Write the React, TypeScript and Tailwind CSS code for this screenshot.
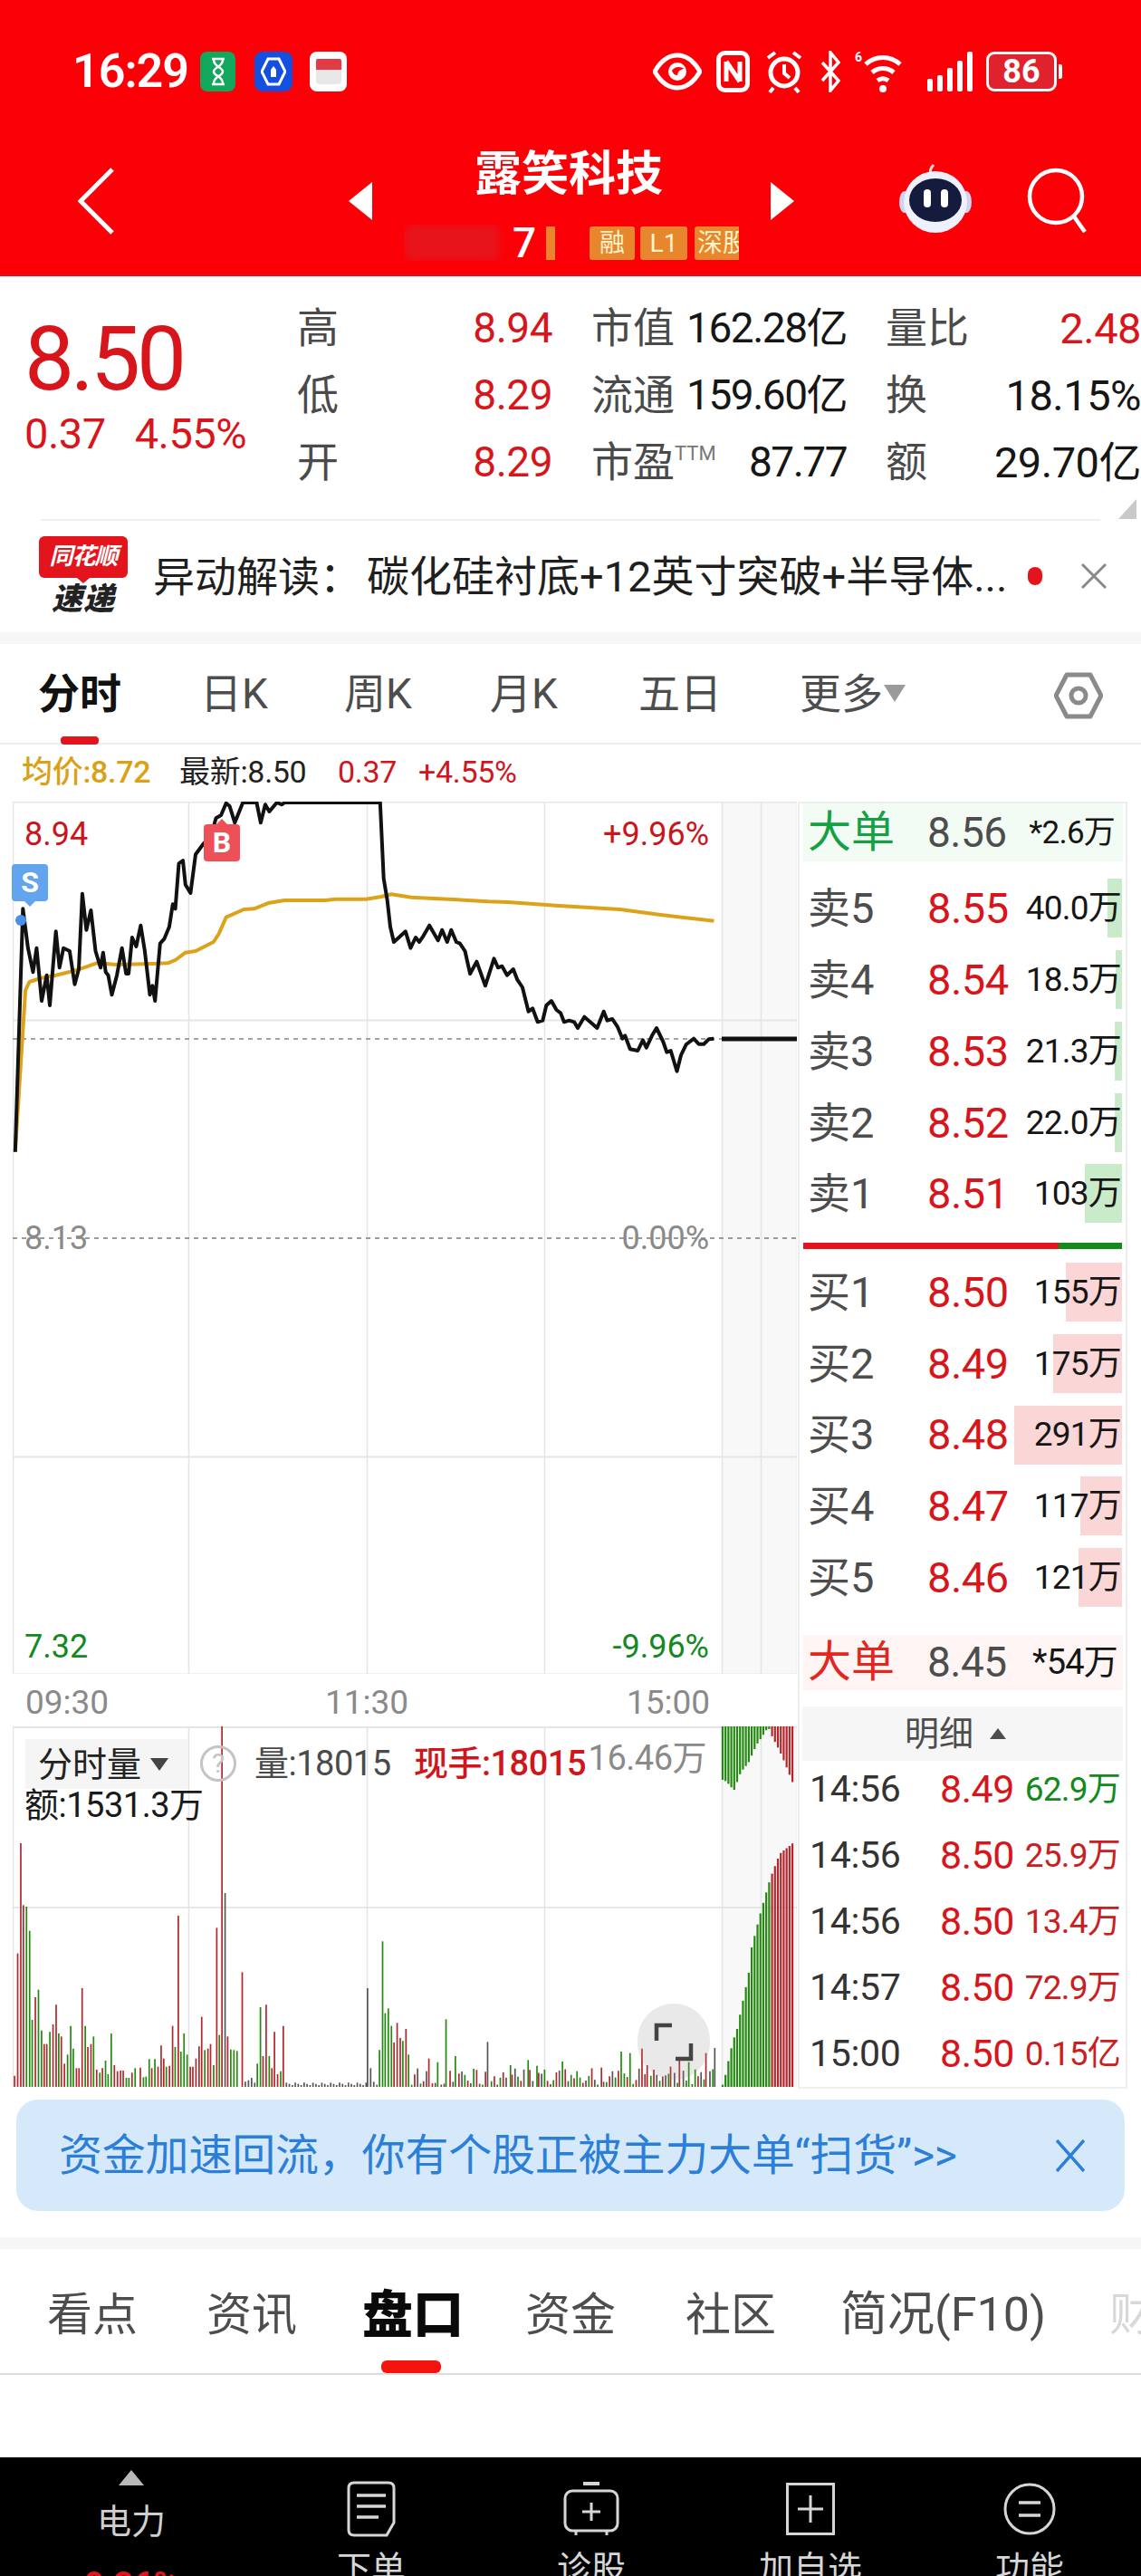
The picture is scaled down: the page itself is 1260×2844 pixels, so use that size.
import type { ReactNode } from 'react';

const RED = 'text-[#d8151b]';

// traced from the minute chart: [x, y] in chart pixels
const rawPrice = [30,1235,45,430,55,560,65,640,72,560,82,735,92,650,98,750,110,505,117,625,125,560,137,570,147,680,155,630,162,380,170,500,179,435,188,570,198,625,203,575,208,640,213,650,220,715,230,650,240,560,248,645,253,645,260,525,268,555,277,485,285,570,295,715,300,685,305,735,315,545,323,530,333,490,340,415,345,430,352,280,360,270,365,350,375,378,385,250,400,215,415,190,425,130,435,120,445,80,452,90,462,145,478,78,505,78,513,145,522,85,530,108,545,78,555,85,560,78,748,78,755,330,762,400,768,490,775,540,785,525,798,505,808,560,818,525,825,540,833,520,845,485,862,535,870,500,880,540,888,500,898,540,905,545,915,570,925,645,938,605,955,685,972,595,980,625,988,620,998,650,1010,630,1018,665,1028,690,1040,770,1048,760,1058,805,1068,800,1075,750,1085,735,1095,765,1103,775,1110,805,1120,800,1130,805,1137,825,1150,788,1165,810,1175,825,1188,770,1195,800,1205,795,1215,820,1225,860,1230,850,1240,895,1255,900,1265,865,1272,890,1283,850,1292,825,1305,870,1312,905,1320,900,1332,968,1340,915,1350,880,1365,860,1375,878,1385,878,1395,862,1405,860];
const rawAvg = [30,1235,50,700,58,672,80,660,110,650,135,640,165,625,190,610,230,615,300,612,330,610,345,600,365,575,385,570,420,540,430,515,445,458,480,432,500,430,530,410,560,402,640,402,660,398,720,398,750,390,770,382,810,392,900,400,960,406,1000,408,1100,420,1220,432,1300,450,1405,470];

function toPoints(raw: number[]) {
  const out: string[] = [];
  for (let i = 0; i < raw.length; i += 2) {
    out.push(`${(raw[i] / 1.782 - 14).toFixed(1)},${(raw[i + 1] / 3 - 25).toFixed(1)}`);
  }
  return out.join(' ');
}

type Bar = [number, number, string];
const volBars: Bar[] = [
  [28,1355,'r'],[34,950,'r'],[40,585,'r'],[45,790,'r'],[51,795,'g'],[57,875,'g'],[62,1170,'g'],[68,1095,'r'],[74,1070,'g'],[80,1205,'g'],[85,1250,'r'],[90,1250,'r'],[96,1210,'g'],[102,1185,'r'],[108,1120,'r'],[113,1215,'g'],[118,1225,'r'],[124,1315,'r'],[130,1285,'g'],[136,1190,'g'],[141,1265,'g'],[147,1330,'r'],[152,1330,'r'],[158,1065,'r'],[164,1190,'g'],[169,1260,'r'],[175,1250,'r'],[180,1225,'g'],[186,1335,'r'],[192,1345,'g'],[197,1330,'r'],[203,1305,'g'],[208,1350,'g'],[214,1215,'g'],[220,1320,'r'],[226,1340,'r'],[232,1338,'r'],[237,1338,'r'],[243,1362,'g'],[248,1362,'g'],[254,1345,'r'],[260,1330,'g'],[270,1328,'r'],[276,1360,'g'],[281,1358,'g'],[287,1300,'g'],[292,1330,'r'],[298,1300,'g'],[304,1325,'r'],[310,1255,'r'],[315,1298,'r'],[320,1325,'g'],[326,1322,'r'],[332,1190,'r'],[337,1260,'g'],[343,825,'r'],[348,1275,'g'],[354,1215,'g'],[360,1285,'g'],[366,1325,'r'],[371,1325,'r'],[377,1298,'r'],[383,1258,'r'],[388,1160,'r'],[394,1270,'g'],[400,1265,'r'],[405,1250,'r'],[411,1320,'g'],[417,865,'r'],[422,1220,'g'],[427,198,'r'],[433,750,'k'],[438,1225,'r'],[444,1268,'g'],[450,1270,'g'],[456,1273,'g'],[466,1012,'r'],[472,1375,'k'],[478,1370,'k'],[484,1362,'k'],[490,1378,'k'],[495,1315,'g'],[501,1128,'g'],[506,1290,'r'],[512,1120,'r'],[518,1290,'g'],[523,1330,'r'],[528,1210,'r'],[534,1350,'r'],[540,1340,'g'],[545,1190,'r'],
  [707,1065,'k'],[713,1330,'k'],[719,1375,'k'],[725,1385,'k'],[730,1270,'g'],[736,910,'g'],[741,1148,'g'],[747,1132,'g'],[753,1190,'g'],[758,1245,'r'],[764,1180,'r'],[770,1230,'r'],[775,1240,'g'],[781,1200,'r'],[786,1285,'g'],
];
for (let i = 0; i < 28; i++) {
  volBars.push([551 + i * 5.68, 1378 + (i % 3) * 4, 'k']);
}
const spikes: Record<number, Bar> = { 6: [825,1298,'r'], 9: [842,1310,'g'], 12: [858,1168,'g'], 15: [876,1290,'g'], 26: [938,1243,'k'], 33: [982,1320,'g'], 39: [1016,1303,'g'], 42: [1033,1322,'g'], 51: [1082,1308,'g'], 56: [1110,1340,'g'], 64: [1157,1328,'r'], 71: [1195,1275,'g'], 74: [1212,1280,'g'], 78: [1235,1265,'r'], 80: [1245,1320,'r'], 88: [1290,1325,'r'], 91: [1307,1295,'r'], 94: [1325,1310,'g'], 100: [1358,1280,'r'], 103: [1375,1263,'k'] };
for (let i = 0; i < 104; i++) {
  if (spikes[i]) {
    volBars.push(spikes[i]);
    continue;
  }
  const n = Math.abs(Math.sin(i * 12.9) * 43758) % 1;
  volBars.push([792 + i * 5.68, 1385 - n * 55, i % 3 === 0 ? 'g' : i % 3 === 1 ? 'r' : 'k']);
}

// call auction columns, interpolated between traced points
const upCurve = [1390,1385,1396,1350,1402,1300,1410,1240,1419,1195,1425,1140,1440,1020,1446,930,1460,835,1472,760,1482,700,1500,620,1525,585];
const downCurve = [1390,375,1397,380,1412,410,1425,350,1440,318,1455,260,1465,235,1478,200,1485,230,1500,280,1510,320,1525,385];

function curveAt(curve: number[], x: number) {
  for (let i = 0; i < curve.length - 2; i += 2) {
    if (x <= curve[i + 2]) {
      const t = (x - curve[i]) / (curve[i + 2] - curve[i]);
      return curve[i + 1] + (curve[i + 3] - curve[i + 1]) * t;
    }
  }
  return curve[curve.length - 1];
}

const auctionXs: number[] = [];
for (let x = 1390; x <= 1526; x += 5.6) auctionXs.push(x);

const barColor: Record<string, string> = { r: '#b3262b', g: '#23890f', k: '#555555' };
const vx = (zx: number) => zx / 1.742 - 14;
const vy = (zy: number) => zy / 3 - 66;

function CloseIcon({ w, h, color, stroke }: { w: number; h: number; color: string; stroke: number }) {
  return (
    <svg width={w} height={h} viewBox={`0 0 ${w} ${h}`} fill="none" stroke={color} strokeWidth={stroke}>
      <path d={`M1 1L${w - 1} ${h - 1}M${w - 1} 1L1 ${h - 1}`} />
    </svg>
  );
}

function StatusIcons() {
  return (
    <div className="flex items-center">
      <svg width="54" height="46" viewBox="0 0 54 46" className="mr-[16px]" fill="none">
        <path d="M2 23C10 9 18 5 27 5s17 4 25 18c-8 14-16 18-25 18S10 37 2 23Z" stroke="#fff" strokeWidth="5" />
        <circle cx="27" cy="23" r="10" fill="#fff" />
        <path d="M21 22c3-5 9-5 14-2-4 0-7 2-8 7-3 0-5-2-6-5Z" fill="#fb0007" />
      </svg>
      <svg width="37" height="46" viewBox="0 0 37 46" className="mr-[17px]" fill="none">
        <rect x="2.5" y="2.5" width="32" height="41" rx="7" stroke="#fff" strokeWidth="5" />
        <path d="M11 12v22M26 12v22M11 12l15 22" stroke="#fff" strokeWidth="5" />
      </svg>
      <svg width="42" height="48" viewBox="0 0 42 48" className="mr-[17px]" fill="none">
        <circle cx="21" cy="25" r="15" stroke="#fff" strokeWidth="5" />
        <path d="M21 16v10l6 5" stroke="#fff" strokeWidth="4" />
        <path d="M3 9l8-6M39 9l-8-6M9 42l-4 5M33 42l4 5" stroke="#fff" strokeWidth="4" />
      </svg>
      <svg width="26" height="46" viewBox="0 0 26 46" className="mr-[14px]" fill="none">
        <path d="M4 13l18 20-9 11V2l9 11L4 33" stroke="#fff" strokeWidth="3.5" />
      </svg>
      <svg width="58" height="48" viewBox="0 0 58 48" className="mr-[22px]" fill="none">
        <path d="M12 16c11-10 27-10 38 0" stroke="#fff" strokeWidth="5" />
        <path d="M19 25c7-6 17-6 24 0" stroke="#fff" strokeWidth="5" />
        <path d="M25 34c4-3 8-3 12 0" stroke="#fff" strokeWidth="5" />
        <circle cx="31" cy="43" r="4" fill="#fff" />
        <text x="0" y="13" fill="#fff" fontSize="14" fontWeight="700" fontFamily="Roboto">6</text>
      </svg>
      <div className="flex items-end gap-[5px] mr-[15px] h-[44px]">
        <div className="w-[6px] h-[14px] bg-white rounded-[2px]" />
        <div className="w-[6px] h-[18px] bg-white rounded-[2px]" />
        <div className="w-[6px] h-[26px] bg-white rounded-[2px]" />
        <div className="w-[6px] h-[34px] bg-white rounded-[2px]" />
        <div className="w-[6px] h-[44px] bg-white rounded-[2px]" />
      </div>
      <div className="flex items-center">
        <div className="w-[78px] h-[44px] rounded-[9px] border-[3px] border-white bg-[#e0222e] flex items-center justify-center text-white text-[36px] font-bold leading-none">
          86
        </div>
        <div className="w-[4px] h-[16px] ml-[2px] bg-white rounded-r-[2px]" />
      </div>
    </div>
  );
}

function Robot() {
  return (
    <svg width="84" height="80" viewBox="0 0 84 80">
      <path d="M37 14c-2-5 0-8 3-11" stroke="#f3d9d9" strokeWidth="3" fill="none" />
      <ellipse cx="8" cy="44" rx="6" ry="12" fill="#cfd3ee" />
      <ellipse cx="76" cy="44" rx="6" ry="12" fill="#cfd3ee" />
      <ellipse cx="42" cy="44" rx="35" ry="34" fill="#eef0fb" />
      <ellipse cx="42" cy="42" rx="29" ry="24" fill="#141b3c" />
      <rect x="29" y="30" width="8" height="20" rx="4" fill="#fff" />
      <rect x="48" y="30" width="8" height="20" rx="4" fill="#fff" />
    </svg>
  );
}

function Header() {
  return (
    <div className="h-[305px] pt-[56px] bg-[#fb0007] text-white border-b-[2px] border-[#d9141c]">
      <div className="h-[46px] flex items-center justify-between pl-[80px] pr-[87px]">
        <div className="flex items-center">
          <span className="text-[52px] font-semibold tracking-[-1px] leading-none w-[141px]">16:29</span>
          <div className="w-[39px] h-[44px] rounded-[8px] bg-[#12a85c] flex items-center justify-center">
            <svg width="20" height="32" viewBox="0 0 20 32" fill="none" stroke="#fff" strokeWidth="2.5">
              <path d="M3 2h14M3 30h14M5 3c0 8 10 8 10 13s-10 5-10 13M15 3c0 8-10 8-10 13s10 5 10 13" />
            </svg>
          </div>
          <div className="w-[42px] h-[44px] ml-[21px] rounded-[9px] bg-[#1450e0] flex items-center justify-center">
            <svg width="28" height="32" viewBox="0 0 28 32" fill="none" stroke="#fff" strokeWidth="3">
              <path d="M8 2h12l7 14-7 14H8L1 16 8 2Z" />
              <path d="M11 22v-8l3-4 3 4v8z" fill="#fff" stroke="none" />
            </svg>
          </div>
          <div className="w-[41px] h-[44px] ml-[19px] rounded-[8px] bg-white flex flex-col items-center justify-center">
            <div className="w-[28px] h-[12px] bg-[#e33a44] rounded-t-[2px]" />
            <div className="w-[28px] h-[16px] bg-[#e8e8e8] rounded-b-[4px]" />
          </div>
        </div>
        <StatusIcons />
      </div>

      <div className="mt-[51px] h-[150px] flex items-start">
        <svg width="40" height="74" viewBox="0 0 40 74" fill="none" stroke="#fff" strokeWidth="5" className="ml-[86px] mt-[32px]">
          <path d="M38 2L3 37l35 35" />
        </svg>
        <div className="flex items-center ml-[259px] h-[92px]">
          <div className="w-0 h-0 mt-[46px] border-y-[21px] border-y-transparent border-r-[26px] border-r-white" />
        </div>
        <div className="w-[440px] flex flex-col items-center">
          <div className="text-[52px] font-bold leading-[60px] mt-[10px] ml-[-6px]">露笑科技</div>
          <div className="flex items-center self-start h-[40px] mt-[25px] w-[370px] ml-[35px] overflow-hidden">
            <div className="w-[105px] h-[40px] shrink-0 bg-[#e8141c] rounded-[8px] blur-[4px]" />
            <span className="ml-[15px] text-[46px] font-medium leading-none w-[37px] shrink-0">7</span>
            <div className="w-[10px] h-[37px] shrink-0 bg-[#e8862e]" />
            <div className="ml-[38px] w-[50px] h-[37px] shrink-0 rounded-[3px] bg-[#e8862e] text-[28px] leading-[37px] text-center text-[#fff3c8]">融</div>
            <div className="ml-[6px] w-[52px] h-[37px] shrink-0 rounded-[3px] bg-[#e8862e] text-[28px] leading-[37px] text-center text-[#fff3c8]">L1</div>
            <div className="ml-[8px] w-[60px] h-[37px] shrink-0 rounded-l-[3px] bg-[#e8862e] text-[28px] leading-[37px] pl-[3px] text-[#fff3c8] whitespace-nowrap">深股</div>
          </div>
        </div>
        <div className="flex items-center h-[92px]">
          <div className="w-0 h-0 mt-[46px] border-y-[21px] border-y-transparent border-l-[26px] border-l-white" />
        </div>
        <div className="ml-[114px] mt-[26px]">
          <Robot />
        </div>
        <svg width="72" height="72" viewBox="0 0 72 72" fill="none" stroke="#fff" strokeWidth="4.5" className="ml-[58px] mt-[32px]">
          <circle cx="33" cy="32" r="29" />
          <path d="M53 54l12 17" />
        </svg>
      </div>
    </div>
  );
}

const quoteRows = [
  { a: '高', av: '8.94', b: '市值', bv: '162.28亿', c: '量比', cv: '2.48', cRed: true },
  { a: '低', av: '8.29', b: '流通', bv: '159.60亿', c: '换', cv: '18.15%', cRed: false },
  { a: '开', av: '8.29', b: '市盈', bv: '87.77', c: '额', cv: '29.70亿', cRed: false },
];

function Quote() {
  return (
    <div className="h-[268px] relative flex">
      <div className="w-[328px] pl-[27px] pt-[42px]">
        <div className={`text-[98px] leading-[100px] tracking-[-4px] ${RED}`}>8.50</div>
        <div className={`mt-[7px] text-[47px] leading-[50px] tracking-[-0.5px] ${RED} flex gap-[32px] whitespace-nowrap`}>
          <span>0.37</span>
          <span>4.55%</span>
        </div>
      </div>
      <div className="pt-[20px] w-[932px]">
        {quoteRows.map((row) => (
          <div key={row.a} className="h-[74px] grid grid-cols-[282px_43px_282px_43px_282px] items-center text-[46px] leading-none text-[#4a4a4a]">
            <div className="flex justify-between items-center">
              <span>{row.a}</span>
              <span className={`text-[46px] tracking-[-0.5px] ${RED}`}>{row.av}</span>
            </div>
            <div />
            <div className="flex justify-between items-center">
              <span className="flex items-start">
                {row.b}
                {row.b === '市盈' && <span className="text-[22px] leading-[28px] text-[#777]">TTM</span>}
              </span>
              <span className="text-[46px] tracking-[-1.5px] text-[#161616]">{row.bv}</span>
            </div>
            <div />
            <div className="flex justify-between items-center">
              <span>{row.c}</span>
              <span className={`text-[47px] tracking-[-0.5px] whitespace-nowrap ${row.cRed ? RED : 'text-[#161616]'}`}>{row.cv}</span>
            </div>
          </div>
        ))}
      </div>
      <div className="absolute right-[5px] bottom-[0px] w-0 h-0 border-b-[22px] border-b-[#c9c9c9] border-l-[20px] border-l-transparent" />
    </div>
  );
}

function News() {
  return (
    <div className="h-[125px] flex items-center border-t-[2px] border-[#efefef] mx-[45px] relative">
      <div className="w-[100px] -ml-[3px] flex flex-col items-center -mt-[4px]">
        <div className="w-[98px] h-[46px] bg-[#e3141c] rounded-[6px] text-white text-[26px] font-bold italic leading-[44px] text-center tracking-[-1px] whitespace-nowrap">同花顺</div>
        <div className="w-0 h-0 border-x-[7px] border-x-transparent border-t-[6px] border-t-[#e3141c]" />
        <div className="text-[34px] font-black italic leading-[34px] text-[#222] tracking-[1px]">速递</div>
      </div>
      <div className="ml-[27px] leading-none text-[#1f1f1f] whitespace-nowrap flex items-center">
        <span className="text-[46px] w-[236px]">异动解读：</span>
        <span className="text-[47px]">碳化硅衬底+12英寸突破+半导体...</span>
      </div>
      <div className="absolute left-[1090px] top-[51px] w-[16px] h-[20px] rounded-full bg-[#e3141c]" />
      <div className="absolute left-[1149px] top-[47px]">
        <CloseIcon w={28} h={28} color="#8a8a8a" stroke={3} />
      </div>
    </div>
  );
}

const periods = [
  { t: '日K', w: 'w-[159px]' },
  { t: '周K', w: 'w-[161px]' },
  { t: '月K', w: 'w-[164px]' },
  { t: '五日', w: 'w-[178px]' },
];

function Periods() {
  return (
    <div className="h-[124px] border-t-[13px] border-[#f6f6f6] border-b-[2px] border-b-[#eeeeee] relative flex items-center pl-[42px] text-[46px] leading-none text-[#4d4d4d]">
      <div className="w-[179px] font-bold text-[#111]">分时</div>
      {periods.map((p) => (
        <div key={p.t} className={p.w}>{p.t}</div>
      ))}
      <div className="flex items-center">
        更多
        <div className="ml-[1px] w-0 h-0 border-x-[12px] border-x-transparent border-t-[19px] border-t-[#9a9a9a]" />
      </div>
      <svg width="54" height="52" viewBox="0 0 54 52" fill="none" stroke="#8a8a8a" strokeWidth="5" className="absolute left-[1164px] top-[31px]">
        <path d="M14 3h26l12 23-12 23H14L2 26 14 3Z" strokeLinejoin="round" />
        <circle cx="27" cy="26" r="8" />
      </svg>
      <div className="absolute left-[67px] bottom-[-2px] w-[42px] h-[9px] rounded-[4px] bg-[#e3141c]" />
    </div>
  );
}

function MainChart() {
  const vLines = [0, 194, 391, 587, 783, 826, 866];
  const hLines = [0, 241, 723, 963];
  return (
    <div className="relative ml-[14px] w-[866px] h-[963px]">
      <svg width="866" height="963" viewBox="0 0 866 963" className="block">
        <rect x="783" y="0" width="83" height="963" fill="#f8f8f8" />
        {vLines.map((x) => (
          <line key={x} x1={x + 0.5} y1="0" x2={x + 0.5} y2="963" stroke="#e4e4e4" strokeWidth="1.5" />
        ))}
        {hLines.map((y) => (
          <line key={y} x1="0" y1={y + 0.5} x2="866" y2={y + 0.5} stroke="#e6e6e6" strokeWidth="2" />
        ))}
        <line x1="0" y1="482" x2="866" y2="482" stroke="#9a9a9a" strokeWidth="2" strokeDasharray="5 5" />
        <line x1="0" y1="262" x2="783" y2="262" stroke="#a8a49a" strokeWidth="2" strokeDasharray="5 5" />
        <polyline points={toPoints(rawAvg)} fill="none" stroke="#dca31a" strokeWidth="4" strokeLinejoin="round" />
        <polyline points={toPoints(rawPrice)} fill="none" stroke="#111" strokeWidth="4" strokeLinejoin="round" />
        <line x1="783" y1="262" x2="866" y2="262" stroke="#111" strokeWidth="5" />
        <circle cx="9" cy="131" r="6" fill="#4a8fe8" />
      </svg>
      <div className="absolute left-[13px] top-[18px] text-[36px] leading-none text-[#c9161c]">8.94</div>
      <div className="absolute right-[97px] top-[18px] text-[36px] leading-none text-[#c9161c]">+9.96%</div>
      <div className="absolute left-[13px] top-[464px] text-[36px] leading-none text-[#8a8a8a]">8.13</div>
      <div className="absolute right-[97px] top-[464px] text-[36px] leading-none text-[#8a8a8a]">0.00%</div>
      <div className="absolute left-[13px] top-[915px] text-[36px] leading-none text-[#13891f]">7.32</div>
      <div className="absolute right-[97px] top-[915px] text-[36px] leading-none text-[#13891f]">-9.96%</div>
      <div className="absolute left-[-1px] top-[69px] flex flex-col items-center">
        <div className="w-[40px] h-[41px] rounded-[4px] bg-[#62a4ee] text-white text-[32px] font-bold leading-[41px] text-center">S</div>
        <div className="w-0 h-0 border-x-[6px] border-x-transparent border-t-[6px] border-t-[#62a4ee]" />
      </div>
      <div className="absolute left-[211px] top-[19px] flex flex-col items-center">
        <div className="w-0 h-0 border-x-[6px] border-x-transparent border-b-[6px] border-b-[#ee5058]" />
        <div className="w-[40px] h-[41px] rounded-[4px] bg-[#ee5058] text-white text-[32px] font-bold leading-[41px] text-center">B</div>
      </div>
    </div>
  );
}

function VolumeChart() {
  const vLines = [0, 194, 391, 587, 783, 826, 866];
  return (
    <div className="relative ml-[14px] w-[866px] h-[398px]">
      <svg width="866" height="398" viewBox="0 0 866 398" className="block">
        <rect x="783" y="0" width="83" height="398" fill="#f8f8f8" />
        {vLines.map((x) => (
          <line key={x} x1={x + 0.5} y1="0" x2={x + 0.5} y2="398" stroke="#e4e4e4" strokeWidth="1.5" />
        ))}
        <line x1="0" y1="1" x2="866" y2="1" stroke="#e6e6e6" strokeWidth="2" />
        <line x1="0" y1="200" x2="866" y2="200" stroke="#e0e0e0" strokeWidth="1.5" />
        {volBars.map(([x, top, c], i) => (
          <line key={i} x1={vx(x)} y1={vy(top)} x2={vx(x)} y2="398" stroke={barColor[c]} strokeWidth="1.7" />
        ))}
        {auctionXs.map((x) => (
          <line key={x} x1={vx(x)} y1={vy(curveAt(upCurve, x))} x2={vx(x)} y2="398" stroke={x < 1480 ? barColor.g : barColor.r} strokeWidth="2.2" />
        ))}
        {auctionXs.map((x) => (
          <line key={x} x1={vx(x)} y1="0" x2={vx(x)} y2={vy(curveAt(downCurve, x))} stroke={x < 1480 ? barColor.g : barColor.r} strokeWidth="2.2" />
        ))}
      </svg>
      <div className="absolute left-[14px] top-[14px] w-[180px] h-[55px] bg-[#f5f5f5] flex items-center pl-[14px] text-[38px] leading-none text-[#222]">
        分时量
        <div className="ml-[10px] w-0 h-0 border-x-[10px] border-x-transparent border-t-[14px] border-t-[#444]" />
      </div>
      <div className="absolute left-[207px] top-[21px] w-[40px] h-[40px] rounded-full border-[3px] border-[#c4c4c4] text-[#c4c4c4] text-[30px] leading-[34px] text-center">?</div>
      <div className="absolute left-[267px] top-[22px] text-[38px] leading-none text-[#4a4a4a] tracking-[-0.5px]">量:18015</div>
      <div className="absolute left-[443px] top-[22px] text-[38px] leading-none font-medium text-[#d0161c] tracking-[-0.5px] whitespace-nowrap">现手:18015</div>
      <div className="absolute right-[100px] top-[16px] text-[38px] leading-none text-[#8a8a8a] tracking-[-0.5px]">16.46万</div>
      <div className="absolute left-[13px] top-[68px] text-[38px] leading-none text-[#1a1a1a] tracking-[-0.5px]">额:1531.3万</div>
      <div className="absolute left-[690px] top-[306px] w-[80px] h-[84px] rounded-full bg-[#8f8f8f]/20 flex items-center justify-center">
        <svg width="44" height="44" viewBox="0 0 44 44" fill="none" stroke="#444" strokeWidth="4.5">
          <path d="M3 21V4h17M41 24v17H24" />
        </svg>
      </div>
    </div>
  );
}

const asks = [
  { l: '卖5', p: '8.55', v: '40.0万', bar: 'w-[16px]' },
  { l: '卖4', p: '8.54', v: '18.5万', bar: 'w-[7px]' },
  { l: '卖3', p: '8.53', v: '21.3万', bar: 'w-[8px]' },
  { l: '卖2', p: '8.52', v: '22.0万', bar: 'w-[8px]' },
  { l: '卖1', p: '8.51', v: '103万', bar: 'w-[41px]' },
];
const bids = [
  { l: '买1', p: '8.50', v: '155万', bar: 'w-[62px]' },
  { l: '买2', p: '8.49', v: '175万', bar: 'w-[76px]' },
  { l: '买3', p: '8.48', v: '291万', bar: 'w-[119px]' },
  { l: '买4', p: '8.47', v: '117万', bar: 'w-[46px]' },
  { l: '买5', p: '8.46', v: '121万', bar: 'w-[48px]' },
];
const ticks = [
  { t: '14:56', p: '8.49', v: '62.9万', up: false },
  { t: '14:56', p: '8.50', v: '25.9万', up: true },
  { t: '14:56', p: '8.50', v: '13.4万', up: true },
  { t: '14:57', p: '8.50', v: '72.9万', up: true },
  { t: '15:00', p: '8.50', v: '0.15亿', up: true },
];

function BookRow({ l, p, v, bar, tone }: { l: string; p: string; v: string; bar: string; tone: string }) {
  return (
    <div className="relative flex items-center h-[79.5px] pl-[9px]">
      <div className={`absolute right-[4px] top-[7px] h-[65px] ${bar} ${tone}`} />
      <span className="relative w-[132px] text-[47px] leading-none text-[#4d4d4d]">{l}</span>
      <span className={`relative text-[47px] leading-none tracking-[-0.5px] ${RED}`}>{p}</span>
      <span className="relative ml-auto mr-[5px] text-[37px] leading-none text-[#161616] tracking-[-0.8px]">{v}</span>
    </div>
  );
}

function OrderBook() {
  return (
    <div className="w-[364px] h-[1421px] border-l-[2px] border-r-[2px] border-y-[2px] border-[#eeeeee] flex flex-col">
      <div className="h-[65px] mx-[3px] bg-[#f3fbf5] flex items-center pl-[6px]">
        <span className="w-[132px] text-[48px] leading-none text-[#14a043]">大单</span>
        <span className="text-[46px] leading-none tracking-[-0.5px] text-[#4d4d4d]">8.56</span>
        <span className="ml-auto mr-[9px] text-[35px] leading-none text-[#161616] tracking-[-0.8px]">*2.6万</span>
      </div>
      <div className="h-[12px]" />
      {asks.map((r) => (
        <BookRow key={r.l} {...r} tone="bg-[#c9ebc9]" />
      ))}
      <div className="h-[15px]" />
      <div className="mx-[4px] h-[7px] flex">
        <div className="w-[282px] bg-[#e3141c]" />
        <div className="flex-1 bg-[#138a1c]" />
      </div>
      <div className="h-[8px]" />
      {bids.map((r) => (
        <BookRow key={r.l} {...r} tone="bg-[#fbd6d6]" />
      ))}
      <div className="h-[24px]" />
      <div className="h-[62px] mx-[3px] bg-[#fef5f4] flex items-center pl-[6px]">
        <span className="w-[132px] text-[48px] leading-none text-[#e3261e]">大单</span>
        <span className="text-[46px] leading-none tracking-[-0.5px] text-[#4d4d4d]">8.45</span>
        <span className="ml-auto mr-[6px] text-[38px] leading-none text-[#161616] tracking-[-0.8px]">*54万</span>
      </div>
      <div className="h-[18px]" />
      <div className="h-[60px] shrink-0 mx-[3px] bg-[#f6f6f6] flex items-center justify-center text-[38px] leading-none text-[#4d4d4d] pr-[16px]">
        明细
        <div className="ml-[18px] w-0 h-0 border-x-[9px] border-x-transparent border-b-[12px] border-b-[#4d4d4d]" />
      </div>
      <div className="-mt-[5px]">
        {ticks.map((r, i) => (
          <div key={i} className="h-[73px] flex items-center pl-[11px]">
            <span className="w-[144px] text-[41px] leading-none text-[#333] tracking-[-0.3px]">{r.t}</span>
            <span className={`text-[43px] leading-none tracking-[-0.5px] ${RED}`}>{r.p}</span>
            <span className={`ml-auto mr-[6px] text-[37px] leading-none tracking-[-0.8px] ${r.up ? 'text-[#c9201f]' : 'text-[#138a1c]'}`}>{r.v}</span>
          </div>
        ))}
      </div>
    </div>
  );
}

const lowerTabs = [
  { t: '看点', w: 'w-[176px]', c: '' },
  { t: '资讯', w: 'w-[172px]', c: '' },
  { t: '盘口', w: 'w-[180px]', c: 'font-black text-[#0a0a0a] text-[56px]' },
  { t: '资金', w: 'w-[177px]', c: '' },
  { t: '社区', w: 'w-[171px]', c: '' },
  { t: '简况(F10)', w: 'w-[297px]', c: 'text-[52px]' },
];

function IconBtn({ label, children }: { label: string; children: ReactNode }) {
  return (
    <div className="flex flex-col items-center">
      <div className="h-[66px] mt-[24px] flex items-center">{children}</div>
      <span className="mt-[14px] text-[38px] leading-none text-[#d6d6d6]">{label}</span>
    </div>
  );
}

function BottomBar() {
  return (
    <div className="h-[131px] bg-black grid grid-cols-[290px_240px_246px_238px_246px] overflow-hidden">
      <div className="flex flex-col items-center">
        <div className="mt-[14px] w-0 h-0 border-x-[14px] border-x-transparent border-b-[17px] border-b-[#b9b9b9]" />
        <span className="mt-[20px] text-[38px] leading-[40px] text-[#cfcfcf]">电力</span>
        <span className="mt-[30px] text-[38px] leading-[40px] font-bold text-[#e3141c]">0.36%</span>
      </div>
      <IconBtn label="下单">
        <svg width="54" height="62" viewBox="0 0 54 62" fill="none" stroke="#d6d6d6" strokeWidth="3">
          <path d="M8 2h38q6 0 6 6v38l-8 14H8q-6 0-6-6V8q0-6 6-6Z" />
          <path d="M11 16h32M11 28h32M11 40h24" strokeWidth="3.5" />
        </svg>
      </IconBtn>
      <IconBtn label="诊股">
        <svg width="62" height="62" viewBox="0 0 62 62" fill="none" stroke="#d6d6d6" strokeWidth="3">
          <path d="M22 3h18" strokeWidth="4" />
          <rect x="2" y="11" width="58" height="44" rx="8" />
          <path d="M31 24v20M21 34h20M14 55v5M48 55v5" />
        </svg>
      </IconBtn>
      <IconBtn label="加自选">
        <svg width="54" height="58" viewBox="0 0 54 58" fill="none" stroke="#d6d6d6" strokeWidth="3">
          <rect x="1.5" y="1.5" width="51" height="55" />
          <path d="M27 14v30M13 29h28" />
        </svg>
      </IconBtn>
      <IconBtn label="功能">
        <svg width="58" height="58" viewBox="0 0 58 58" fill="none" stroke="#d6d6d6" strokeWidth="3">
          <circle cx="29" cy="29" r="27" />
          <path d="M17 22h24M17 36h24" strokeWidth="3.5" />
        </svg>
      </IconBtn>
    </div>
  );
}

export default function App() {
  return (
    <div className="w-[1260px] h-[2844px] overflow-hidden bg-white font-['Roboto','Noto_Sans_CJK_SC',sans-serif]">
      <Header />
      <Quote />
      <News />
      <Periods />

      <div className="h-[63px] flex items-center pl-[24px] text-[34px] leading-none tracking-[-0.3px] pb-[3px]">
        <span className="w-[174px] text-[#d9a216] font-medium">均价:8.72</span>
        <span className="w-[175px] text-[#222]">最新:8.50</span>
        <span className="w-[89px] text-[#d0161c]">0.37</span>
        <span className="text-[#d0161c]">+4.55%</span>
      </div>

      <div className="flex">
        <div className="w-[881px]">
          <MainChart />
          <div className="h-[58px] ml-[14px] w-[866px] text-[37px] leading-[64px] text-[#8a8a8a] flex">
            <span className="w-[345px] pl-[14px]">09:30</span>
            <span className="w-[333px]">11:30</span>
            <span>15:00</span>
          </div>
          <VolumeChart />
        </div>
        <OrderBook />
      </div>

      <div className="mt-[12px] mx-[18px] h-[123px] rounded-[24px] bg-[#d5e9fb] flex items-center justify-between pl-[47px] pr-[44px]">
        <span className="text-[48px] leading-none text-[#2b7fd8] tracking-[-0.2px]">资金加速回流，你有个股正被主力大单“扫货”&gt;&gt;</span>
        <CloseIcon w={32} h={36} color="#2b7fd8" stroke={3.5} />
      </div>

      <div className="mt-[29px] h-[13px] bg-[#f6f6f6]" />

      <div className="h-[139px] relative flex items-center pl-[52px] pt-[8px] border-b-[2px] border-[#dddddd] text-[50px] leading-none text-[#4d4d4d] whitespace-nowrap">
        {lowerTabs.map((t) => (
          <div key={t.t} className={`${t.w} shrink-0 ${t.c}`}>{t.t}</div>
        ))}
        <div className="text-[#d8d8d8]">财</div>
        <div className="absolute left-[421px] bottom-[0px] w-[66px] h-[14px] rounded-[6px] bg-[#f5130f]" />
      </div>

      <div className="h-[91px]" />
      <BottomBar />
    </div>
  );
}
